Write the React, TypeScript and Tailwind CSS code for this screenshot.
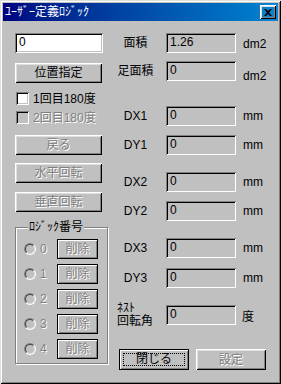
const sunken =
  "shadow-[inset_1px_1px_#808080,inset_-1px_-1px_#fff,inset_2px_2px_#000,inset_-2px_-2px_#c0c0c0]";
const raised =
  "shadow-[inset_1px_1px_#fff,inset_-1px_-1px_#000,inset_2px_2px_#dfdfdf,inset_-2px_-2px_#808080]";
const framed =
  "shadow-[inset_0_0_0_1px_#000,inset_2px_2px_#fff,inset_-2px_-2px_#808080]";
const dim = "text-[#808080] [text-shadow:1px_1px_0_#fff]";

function Btn({ label, disabled, className = "" }: { label: string; disabled?: boolean; className?: string }) {
  return (
    <div
      className={`w-[87px] h-[20px] flex items-center justify-center ${raised} ${disabled ? dim : ""} ${className}`}
    >
      {label}
    </div>
  );
}

function Field({ value }: { value: string }) {
  return (
    <div className={`ml-[8px] w-[70px] h-[20px] pl-[4px] pt-[3px] leading-[13px] ${sunken}`}>{value}</div>
  );
}

function Row({ label, unit, className = "" }: { label: string; unit: string; className?: string }) {
  return (
    <div className={`flex items-center h-[20px] ${className}`}>
      <span className="w-[45px] text-center">{label}</span>
      <Field value="0" />
      <span className="ml-[7px]">{unit}</span>
    </div>
  );
}

function Radio() {
  return (
    <div className="w-[12px] h-[12px] rounded-full border border-t-[#808080] border-l-[#808080] border-b-[#fff] border-r-[#fff] flex">
      <div className="flex-1 rounded-full border border-t-[#404040] border-l-[#404040] border-b-[#dfdfdf] border-r-[#dfdfdf] bg-[#c0c0c0]" />
    </div>
  );
}

export default function App() {
  return (
    <div className="w-[281px] h-[384px] bg-[#c0c0c0] p-[3px] flex flex-col text-[12px] text-black font-['Liberation_Sans','Noto_Sans_CJK_JP',sans-serif] shadow-[inset_1px_1px_#dfdfdf,inset_-1px_-1px_#000,inset_2px_2px_#fff,inset_-2px_-2px_#808080]">
      <div className="h-[18px] flex items-center justify-between pl-[2px] pr-[2px] bg-linear-to-r from-[#000080] to-[#1084d0]">
        <span className="text-white leading-[14px]">ﾕｰｻﾞｰ定義ﾛｼﾞｯｸ</span>
        <div className={`w-[16px] h-[14px] flex items-center justify-center ${raised}`}>
          <svg width="8" height="7" viewBox="0 0 8 7">
            <path d="M0 0h2l2 2 2-2h2L5 3.5 8 7H6L4 5 2 7H0l3-3.5z" fill="#000" />
          </svg>
        </div>
      </div>

      <div className="flex pl-[12px] pt-[12px]">
        {/* left column */}
        <div className="w-[93px] flex flex-col">
          <div className={`w-[88px] h-[20px] bg-white pl-[4px] pt-[3px] leading-[13px] ${sunken}`}>0</div>
          <Btn label="位置指定" className="mt-[10px]" />
          <div className="mt-[9px] ml-[1px] flex items-center h-[13px]">
            <div className={`w-[13px] h-[13px] bg-white ${sunken}`} />
            <span className="ml-[4px]">1回目180度</span>
          </div>
          <div className="mt-[6px] ml-[1px] flex items-center h-[13px]">
            <div className={`w-[13px] h-[13px] ${sunken}`} />
            <span className={`ml-[4px] ${dim}`}>2回目180度</span>
          </div>
          <Btn label="戻る" disabled className="mt-[11px]" />
          <Btn label="水平回転" disabled className="mt-[8px]" />
          <Btn label="垂直回転" disabled className="mt-[9px]" />

          <fieldset className="mt-[8px] w-[93px] min-w-0 border border-[#808080] shadow-[inset_1px_1px_#fff,1px_1px_#fff] pl-[8px] pr-[9px] pt-[5px] pb-[4px] flex flex-col gap-[5px]">
            <legend className="ml-[4px] px-[1px] leading-[14px] whitespace-nowrap bg-[#c0c0c0]">ﾛｼﾞｯｸ番号</legend>
            {["0", "1", "2", "3", "4"].map((n) => (
              <div key={n} className="flex items-center h-[20px]">
                <Radio />
                <span className={`ml-[4px] ${dim}`}>{n}</span>
                <div className={`ml-auto w-[41px] h-[20px] flex items-center justify-center ${framed} ${dim}`}>
                  削除
                </div>
              </div>
            ))}
          </fieldset>
        </div>

        {/* right column */}
        <div className="ml-[5px] flex flex-col">
          <div className="flex items-center h-[20px]">
            <span className="w-[45px] text-center">面積</span>
            <Field value="1.26" />
            <span className="ml-[7px] mt-[2px]">dm2</span>
          </div>
          <div className="flex items-center h-[20px] mt-[8px]">
            <span className="w-[45px] text-center">足面積</span>
            <Field value="0" />
            <span className="ml-[7px] mt-[10px]">dm2</span>
          </div>
          <Row label="DX1" unit="mm" className="mt-[25px]" />
          <Row label="DY1" unit="mm" className="mt-[9px]" />
          <Row label="DX2" unit="mm" className="mt-[17px]" />
          <Row label="DY2" unit="mm" className="mt-[9px]" />
          <Row label="DX3" unit="mm" className="mt-[17px]" />
          <Row label="DY3" unit="mm" className="mt-[10px]" />
          <div className="flex items-center h-[21px] mt-[16px]">
            <span className="w-[45px] pl-[4px] leading-[13px]">
              ﾈｽﾄ
              <br />
              回転角
            </span>
            <Field value="0" />
            <span className="ml-[6px] mt-[4px]">度</span>
          </div>
          <div className="flex mt-[24px] ml-[6px] gap-[7px]">
            <div className={`w-[70px] h-[21px] p-[4px] flex ${framed}`}>
              <div className="flex-1 border border-dotted border-black flex items-center justify-center leading-[11px]">
                閉じる
              </div>
            </div>
            <div className={`w-[70px] h-[21px] flex items-center justify-center ${raised} ${dim}`}>設定</div>
          </div>
        </div>
      </div>
    </div>
  );
}
